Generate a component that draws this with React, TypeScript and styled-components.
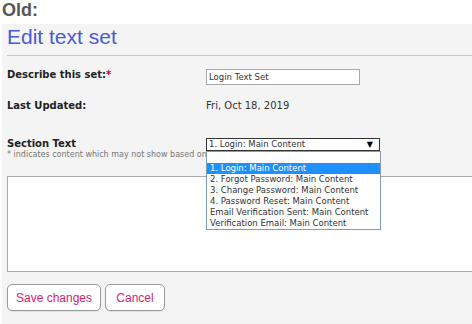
import React from 'react';
import styled, { createGlobalStyle } from 'styled-components';

const GlobalStyle = createGlobalStyle`
  html, body {
    margin: 0;
    padding: 0;
    background: #ffffff;
    overflow: hidden;
  }
`;

const Page = styled.div`
  width: 472px;
  height: 324px;
  display: flex;
  flex-direction: column;
`;

const OldLabel = styled.div`
  font-family: 'Liberation Sans', Arial, sans-serif;
  font-weight: 700;
  font-size: 18px;
  line-height: normal;
  color: #555555;
  padding-left: 2px;
  margin-bottom: 3px;
`;

const Panel = styled.div`
  flex: 1;
  margin-left: 2px;
  background: #f4f4f4;
  padding: 1px 0 0 5px;
  position: relative;
`;

const Title = styled.h1`
  margin: 0;
  font-family: 'Liberation Sans', Arial, sans-serif;
  font-weight: 400;
  font-size: 21px;
  line-height: 24px;
  color: #4b5ad6;
`;

const Rule = styled.hr`
  border: 0;
  border-top: 1px solid #c8c8c8;
  margin: 6px 0 0 0;
`;

const Row = styled.div<{ $top: number }>`
  display: flex;
  align-items: flex-start;
  margin-top: ${({ $top }) => $top}px;
`;

const Label = styled.div`
  width: 199px;
  font-family: 'DejaVu Sans', Verdana, sans-serif;
  font-weight: 700;
  font-size: 10px;
  color: #222222;
`;

const Required = styled.span`
  color: #d0021b;
`;

const Value = styled.div`
  font-family: 'DejaVu Sans', Verdana, sans-serif;
  font-size: 10px;
  color: #333333;
`;

const TextInput = styled.div`
  width: 150px;
  height: 14px;
  border: 1px solid #a9a9a9;
  background: #ffffff;
  font-family: 'DejaVu Sans', Verdana, sans-serif;
  font-size: 8.5px;
  line-height: 14px;
  padding-left: 2px;
  color: #333333;
`;

const SectionLabel = styled.div`
  width: 199px;
  display: flex;
  flex-direction: column;
`;

const Note = styled.div`
  font-family: 'DejaVu Sans', Verdana, sans-serif;
  font-size: 8px;
  color: #777777;
  white-space: nowrap;
  margin-top: 1px;
`;

const SelectWrap = styled.div`
  position: relative;
  z-index: 2;
`;

const SelectBox = styled.div`
  width: 170px;
  height: 11px;
  border: 1px solid #333333;
  background: #ffffff;
  font-family: 'DejaVu Sans', Verdana, sans-serif;
  font-size: 8.5px;
  line-height: 11px;
  padding-left: 2px;
  color: #333333;
  display: flex;
  justify-content: space-between;
`;

const Arrow = styled.span`
  font-size: 8px;
  color: #000000;
  padding-right: 6px;
`;

const OptionList = styled.div`
  position: absolute;
  top: 13px;
  left: 0;
  width: 173px;
  border: 1px solid #7f9db9;
  background: #ffffff;
`;

const OptionItem = styled.div<{ $active?: boolean }>`
  height: 11px;
  line-height: 11px;
  padding-left: 3px;
  font-family: 'DejaVu Sans', Verdana, sans-serif;
  font-size: 8.5px;
  white-space: nowrap;
  color: ${({ $active }) => ($active ? '#ffffff' : '#333333')};
  background: ${({ $active }) => ($active ? '#1e90ff' : 'transparent')};
`;

const Editor = styled.div`
  margin-top: 17px;
  height: 94px;
  margin-right: -10px;
  border: 1px solid #aaaaaa;
  background: #ffffff;
`;

const Actions = styled.div`
  display: flex;
  gap: 4px;
  margin-top: 12px;
`;

const ActionButton = styled.button<{ $width: number }>`
  width: ${({ $width }) => $width}px;
  height: 27px;
  border: 1px solid #9a9a9a;
  border-radius: 5px;
  background: #ffffff;
  font-family: 'Liberation Sans', Arial, sans-serif;
  font-size: 12px;
  color: #d6246e;
  padding: 0;
  box-shadow: 0 1px 1px rgba(0, 0, 0, 0.08);
`;

const options = [
  '',
  '1. Login: Main Content',
  '2. Forgot Password: Main Content',
  '3. Change Password: Main Content',
  '4. Password Reset: Main Content',
  'Email Verification Sent: Main Content',
  'Verification Email: Main Content',
];

export default function App(): JSX.Element {
  return (
    <Page>
      <GlobalStyle />
      <OldLabel>Old:</OldLabel>
      <Panel>
        <Title>Edit text set</Title>
        <Rule />
        <Row $top={13}>
          <Label>
            Describe this set:<Required>*</Required>
          </Label>
          <TextInput>Login Text Set</TextInput>
        </Row>
        <Row $top={15}>
          <Label>Last Updated:</Label>
          <Value>Fri, Oct 18, 2019</Value>
        </Row>
        <Row $top={27}>
          <SectionLabel>
            <Label>Section Text</Label>
            <Note>* indicates content which may not show based on current settings</Note>
          </SectionLabel>
          <SelectWrap>
            <SelectBox>
              <span>1. Login: Main Content</span>
              <Arrow>▼</Arrow>
            </SelectBox>
            <OptionList>
              {options.map((o, i) => (
                <OptionItem key={i} $active={i === 1}>
                  {o || '\u00a0'}
                </OptionItem>
              ))}
            </OptionList>
          </SelectWrap>
        </Row>
        <Editor />
        <Actions>
          <ActionButton $width={94}>Save changes</ActionButton>
          <ActionButton $width={60}>Cancel</ActionButton>
        </Actions>
      </Panel>
    </Page>
  );
}
